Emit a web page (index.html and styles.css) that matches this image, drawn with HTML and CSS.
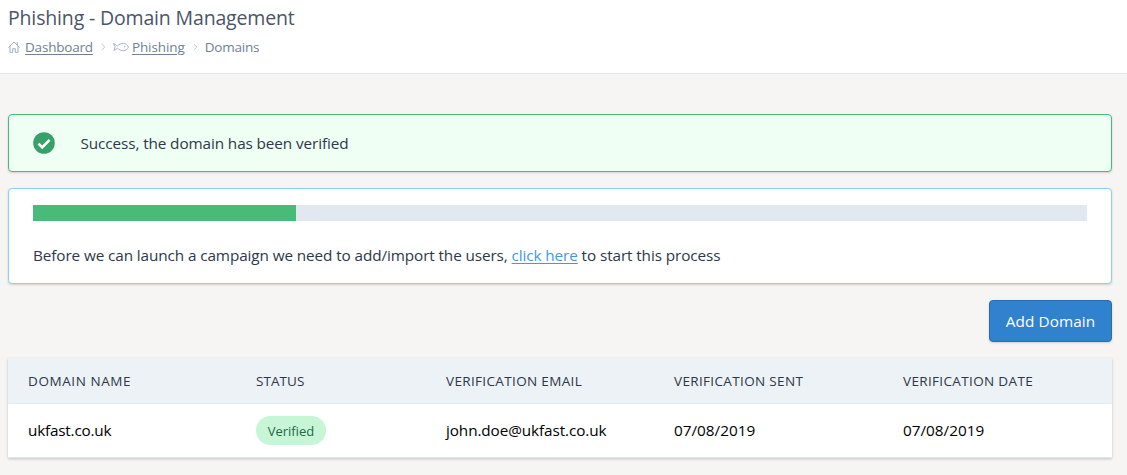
FILE: index.html
```html
<!DOCTYPE html>
<html lang="en">
<head>
<meta charset="utf-8">
<title>Phishing - Domain Management</title>
<link rel="stylesheet" href="styles.css">
</head>
<body>
<header class="page-header">
  <h1 class="page-title">Phishing - Domain Management</h1>
  <nav class="breadcrumb">
    <svg class="icon-home" viewBox="0 0 12 12"><path d="M.7 6.3 6 1l5.3 5.300M2 5.200V11.300h2.700V7.700h2.600v3.600H10V5.200M9.300 1.600v2.300"/></svg>
    <a class="crumb crumb-dashboard" href="#">Dashboard</a>
    <svg class="icon-sep" viewBox="0 0 5 8"><path d="M1 1.200 3.800 4 1 6.800"/></svg>
    <svg class="icon-fish" viewBox="0 0 16 10"><path d="M.8 1.600 4.600 3.800C6 2.300 8 1.300 10.200 1.300c2.400 0 4.300 1.300 5.200 3.700-.9 2.400-2.800 3.700-5.200 3.700C8 8.700 6 7.700 4.600 6.200L.8 8.400 2 5z"/><circle class="fish-eye" cx="11.800" cy="4.800" r=".7"/></svg>
    <a class="crumb crumb-phishing" href="#">Phishing</a>
    <svg class="icon-sep" viewBox="0 0 5 8"><path d="M1 1.200 3.800 4 1 6.800"/></svg>
    <span class="crumb crumb-current">Domains</span>
  </nav>
</header>
<main class="content">
  <section class="alert alert-success">
    <svg class="icon-check" viewBox="0 0 22 22"><circle cx="11" cy="11" r="10.800"/><path d="m5.400 11.600 3.800 3.700 7.400-7.500"/></svg>
    <p class="alert-text">Success, the domain has been verified</p>
  </section>
  <section class="alert alert-progress">
    <div class="progress"><div class="progress-bar" style="width:24.95%"></div></div>
    <p class="progress-text">Before we can launch a campaign we need to add/import the users, <a class="link" href="#">click here</a> to start this process</p>
  </section>
  <div class="actions"><button class="button">Add Domain</button></div>
  <table class="domains">
    <colgroup><col class="col-name"><col class="col-status"><col class="col-email"><col class="col-sent"><col class="col-date"></colgroup>
    <thead><tr><th class="head-name">Domain Name</th><th class="head-status">Status</th><th>Verification Email</th><th>Verification Sent</th><th>Verification Date</th></tr></thead>
    <tbody><tr><td class="domain">ukfast.co.uk</td><td><span class="badge">Verified</span></td><td class="email">john.doe@ukfast.co.uk</td><td>07/08/2019</td><td>07/08/2019</td></tr></tbody>
  </table>
</main>
</body>
</html>
```
FILE: styles.css
```css
* { box-sizing: border-box; }
body {
  margin: 0;
  min-height: 475px;
  background: #f6f5f3;
  color: #2d3748;
  font-family: "Open Sans", "Noto Sans", sans-serif;
  font-size: 15.3px;
  line-height: 24px;
}
h1, p { margin: 0; font-weight: 400; }
svg { display: block; flex: none; fill: none; stroke-linejoin: round; stroke-linecap: round; }

.page-header { height: 74px; padding: 3px 8px 0; background: #fff; border-bottom: 1px solid #e2e8f0; }
.page-title { font-size: 19.5px; line-height: 30px; letter-spacing: -.16px; color: #4a5568; }
.breadcrumb { display: flex; align-items: center; margin-top: 4px; line-height: 20px; font-size: 13.5px; letter-spacing: -.2px; color: #718096; }
.crumb { color: #718096; }
.crumb-phishing { letter-spacing: -.1px; }
.crumb-dashboard, .crumb-phishing { text-underline-offset: 2px; text-decoration-thickness: 1px; }
.icon-home { width: 12px; height: 12px; margin-right: 5px; stroke: #a0aec0; }
.icon-sep { width: 5px; height: 8px; margin: 0 7px 0 8px; stroke: #bcc7d5; }
.icon-fish { width: 16px; height: 10px; margin-right: 3px; stroke: #a0aec0; stroke-width: .9; }
.fish-eye { fill: #a0aec0; stroke: none; }

.content { padding: 40px 15px 0 8px; }
.alert { border: 1px solid; border-radius: 4px; box-shadow: 0 1px 3px rgba(0,0,0,.1), 0 1px 2px rgba(0,0,0,.06); }
.alert-success { display: flex; align-items: center; height: 58px; padding: 0 24px; border-color: #48bb78; background: #f0fff4; }
.alert-text, .progress-text { letter-spacing: -.1px; }
.icon-check { width: 22px; height: 22px; margin-right: 25.5px; fill: #38a169; }
.icon-check path { fill: none; stroke: #fff; stroke-width: 2.6; stroke-linecap: butt; stroke-linejoin: miter; }
.alert-progress { height: 96px; margin-top: 16px; padding: 16px 24px; border-color: #90cdf4; background: #fff; }
.progress { height: 16px; background: #e2e8f0; }
.progress-bar { height: 100%; background: #48bb78; }
.progress-text { margin-top: 22px; }
.link { color: #4299e1; text-underline-offset: 2px; text-decoration-thickness: 1px; }

.actions { display: flex; justify-content: flex-end; margin-top: 16px; }
.button { width: 123px; height: 42px; padding: 0; border: 1px solid #2b6cb0; border-radius: 4px; background: #3182ce; color: #fff; font: 15.3px/24px "Open Sans", sans-serif; letter-spacing: .08px; box-shadow: 0 1px 3px rgba(0,0,0,.1), 0 1px 2px rgba(0,0,0,.06); }

.domains { width: 1104px; margin-top: 16px; table-layout: fixed; border-collapse: separate; border-spacing: 0; background: #fff; color: #000; box-shadow: 0 1px 3px rgba(0,0,0,.14), 0 1px 2px rgba(0,0,0,.08); }
.col-name { width: 228px; }
.col-status { width: 190px; }
.col-email { width: 228px; }
.col-sent { width: 229px; }
.col-date { width: 229px; }
.domains th { height: 46px; padding: 0 20px; background: #edf2f7; border-bottom: 1px solid #e2e8f0; color: #2d3748; font-size: 13.5px; font-weight: 400; letter-spacing: .35px; text-align: left; text-transform: uppercase; }
.domains .head-name { letter-spacing: .58px; }
.domains .head-status { letter-spacing: .05px; }
.domains td { height: 54px; padding: 0 20px 2px; border-bottom: 1px solid #e2e8f0; }
.domains .domain { letter-spacing: -.2px; }
.domains .email { letter-spacing: -.1px; }
.badge { display: inline-flex; align-items: center; justify-content: center; width: 70px; height: 29px; border-radius: 15px; background: #c6f6d5; color: #276749; font-size: 13px; vertical-align: middle; position: relative; top: 1px; }
```
